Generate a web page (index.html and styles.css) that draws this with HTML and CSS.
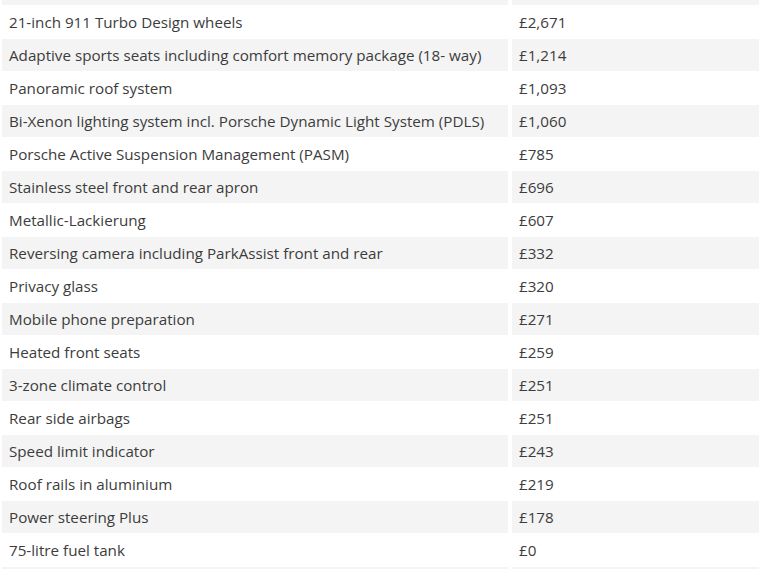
FILE: index.html
```html
<!DOCTYPE html>
<html lang="en">
<head>
<meta charset="utf-8">
<title>Options</title>
<link rel="stylesheet" href="styles.css">
</head>
<body>
<div class="options">
  <div class="cell edge alt"></div><div class="cell edge alt"></div>
  <div class="cell">21-inch 911 Turbo Design wheels</div><div class="cell">£2,671</div>
  <div class="cell alt">Adaptive sports seats including comfort memory package (18- way)</div><div class="cell alt">£1,214</div>
  <div class="cell">Panoramic roof system</div><div class="cell">£1,093</div>
  <div class="cell alt">Bi-Xenon lighting system incl. Porsche Dynamic Light System (PDLS)</div><div class="cell alt">£1,060</div>
  <div class="cell">Porsche Active Suspension Management (PASM)</div><div class="cell">£785</div>
  <div class="cell alt">Stainless steel front and rear apron</div><div class="cell alt">£696</div>
  <div class="cell">Metallic-Lackierung</div><div class="cell">£607</div>
  <div class="cell alt">Reversing camera including ParkAssist front and rear</div><div class="cell alt">£332</div>
  <div class="cell">Privacy glass</div><div class="cell">£320</div>
  <div class="cell alt">Mobile phone preparation</div><div class="cell alt">£271</div>
  <div class="cell">Heated front seats</div><div class="cell">£259</div>
  <div class="cell alt">3-zone climate control</div><div class="cell alt">£251</div>
  <div class="cell">Rear side airbags</div><div class="cell">£251</div>
  <div class="cell alt">Speed limit indicator</div><div class="cell alt">£243</div>
  <div class="cell">Roof rails in aluminium</div><div class="cell">£219</div>
  <div class="cell alt">Power steering Plus</div><div class="cell alt">£178</div>
  <div class="cell">75-litre fuel tank</div><div class="cell">£0</div>
  <div class="cell edge alt"></div><div class="cell edge alt"></div>
</div>
</body>
</html>
```
FILE: styles.css
```css
html, body {
  margin: 0;
  padding: 0;
  background: #ffffff;
  overflow: hidden;
}
.options {
  display: grid;
  grid-template-columns: 506px 1fr;
  column-gap: 4px;
  row-gap: 1px;
  padding-left: 2px;
  font-family: "Open Sans", "Liberation Sans", sans-serif;
  font-size: 15.2px;
  color: #3c3c3c;
}
.cell {
  height: 32px;
  line-height: 33px;
  padding: 0 7px;
  white-space: nowrap;
  overflow: hidden;
  background: #ffffff;
}
.cell.alt {
  background: #f4f4f4;
}
.cell.edge {
  height: 5px;
}
```
